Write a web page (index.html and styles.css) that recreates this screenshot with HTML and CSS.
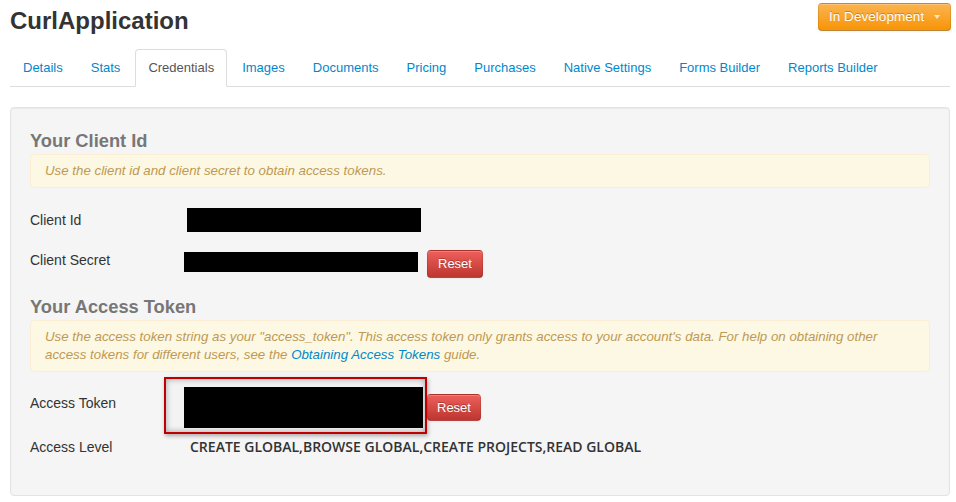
FILE: index.html
```html
<!DOCTYPE html>
<html>
<head>
<meta charset="utf-8">
<title>CurlApplication</title>
<link rel="stylesheet" href="styles.css">
</head>
<body>
<header class="topbar">
  <h1 class="app-title">CurlApplication</h1>
  <button class="btn btn-warning">In Development <span class="caret"></span></button>
</header>
<ul class="nav-tabs">
  <li><a href="#">Details</a></li>
  <li><a href="#">Stats</a></li>
  <li class="active"><a href="#">Credentials</a></li>
  <li><a href="#">Images</a></li>
  <li><a href="#">Documents</a></li>
  <li><a href="#">Pricing</a></li>
  <li><a href="#">Purchases</a></li>
  <li><a href="#">Native Settings</a></li>
  <li><a href="#">Forms Builder</a></li>
  <li><a href="#">Reports Builder</a></li>
</ul>
<div class="well">
  <h3 class="section-title">Your Client Id</h3>
  <div class="alert">Use the client id and client secret to obtain access tokens.</div>
  <div class="field field-id">
    <span class="field-label">Client Id</span>
    <span class="redact redact-id"></span>
  </div>
  <div class="field field-secret">
    <span class="field-label">Client Secret</span>
    <span class="redact redact-secret"></span>
    <button class="btn btn-danger">Reset</button>
  </div>
  <h3 class="section-title section-title-spaced">Your Access Token</h3>
  <div class="alert">Use the access token string as your "access_token". This access token only grants access to your account's data. For help on obtaining other<br>access tokens for different users, see the <a href="#" class="alert-link">Obtaining Access Tokens</a> guide.</div>
  <div class="field field-token">
    <span class="field-label">Access Token</span>
    <span class="token-frame"><span class="redact redact-token"></span></span>
    <button class="btn btn-danger btn-token">Reset</button>
  </div>
  <div class="field field-level">
    <span class="field-label">Access Level</span>
    <span class="level-value">CREATE GLOBAL,BROWSE GLOBAL,CREATE PROJECTS,READ GLOBAL</span>
  </div>
</div>
</body>
</html>
```
FILE: styles.css
```css
* { box-sizing: border-box; }
body {
  margin: 0;
  background: #fff;
  color: #333;
  font-family: "Liberation Sans", Arial, sans-serif;
  font-size: 13px;
}
.topbar {
  display: flex;
  justify-content: space-between;
  align-items: flex-start;
  height: 36px;
  padding: 3px 5px 0 10px;
}
.app-title {
  margin: 3px 0 0;
  font-size: 24px;
  line-height: 30px;
  font-weight: bold;
  color: #333;
}
.btn {
  display: inline-block;
  font-family: "Liberation Sans", Arial, sans-serif;
  font-size: 13px;
  line-height: 18px;
  padding: 4px 10px;
  border: 1px solid;
  border-color: rgba(0,0,0,.1) rgba(0,0,0,.1) rgba(0,0,0,.25);
  border-radius: 4px;
  color: #fff;
  text-shadow: 0 -1px 0 rgba(0,0,0,.25);
  box-shadow: inset 0 1px 0 rgba(255,255,255,.2), 0 1px 2px rgba(0,0,0,.05);
  cursor: pointer;
}
.btn-warning {
  height: 28px;
  padding: 4px 10px 4px 10px;
  font-size: 13.6px;
  background: linear-gradient(#fbb450, #f89406);
}
.caret {
  display: inline-block;
  width: 0;
  height: 0;
  margin-left: 6px;
  vertical-align: middle;
  border-top: 4px solid #fff;
  border-left: 3px solid transparent;
  border-right: 3px solid transparent;
  opacity: .75;
}
.btn-danger {
  height: 28px;
  background: linear-gradient(#ee5f5b, #bd362f);
}
.nav-tabs {
  display: flex;
  margin: 13px 6px 0 10px;
  padding: 0;
  list-style: none;
  border-bottom: 1px solid #ddd;
}
.nav-tabs li { margin-bottom: -1px; }
.nav-tabs a {
  display: block;
  padding: 8px 12px;
  margin-right: 2px;
  line-height: 20px;
  border: 1px solid transparent;
  border-radius: 4px 4px 0 0;
  color: #0088cc;
  text-decoration: none;
}
.nav-tabs .active a {
  color: #555;
  background: #fff;
  border-color: #ddd #ddd transparent;
}
.well {
  margin: 20px 6px 0 10px;
  padding: 19px;
  background: #f5f5f5;
  border: 1px solid #e3e3e3;
  border-radius: 4px;
  box-shadow: inset 0 1px 1px rgba(0,0,0,.05);
}
.section-title {
  margin: 4px 0 3px;
  font-size: 18.3px;
  line-height: 20px;
  font-weight: bold;
  color: #777;
}
.section-title-spaced { margin-top: 19px; }
.alert {
  padding: 7px 35px 7px 14px;
  background: #fcf8e3;
  border: 1px solid #fbeed5;
  border-radius: 4px;
  color: #c09853;
  font-style: italic;
  font-size: 13.3px;
  line-height: 18px;
}
.alert-link { color: #0088cc; text-decoration: none; }
.field {
  display: flex;
  align-items: flex-start;
}
.field-label {
  flex: none;
  width: 154px;
  font-size: 14px;
  line-height: 20px;
  color: #333;
}
.redact { display: block; background: #000; flex: none; }
.field-id { margin-top: 20px; }
.field-id .field-label { margin-top: 2px; }
.redact-id { margin-left: 3px; width: 234px; height: 24px; }
.field-secret { margin-top: 18px; }
.redact-secret { margin-top: 2px; width: 234px; height: 20px; margin-right: 9px; }
.field-token { margin-top: 5px; }
.field-token .field-label { margin-top: 16px; }
.token-frame {
  display: block;
  flex: none;
  width: 263px;
  height: 57px;
  margin-left: -20px;
  padding: 8px 2px 4px 18px;
  border: 2px solid #c00000;
  background: #f3f3f3;
  box-shadow: 1px 2px 4px rgba(0,0,0,.3), inset 0 0 6px rgba(0,0,0,.35);
}
.redact-token { width: 239px; height: 41px; }
.btn-token { margin-top: 17px; height: 27px; padding: 3px 9px; }
.field-level { margin-top: 3px; margin-bottom: 19px; }
.level-value {
  margin-left: 6px;
  font-family: "Open Sans", "Liberation Sans", sans-serif;
  font-weight: 600;
  font-size: 14px;
  line-height: 20px;
  color: #333;
}
```
